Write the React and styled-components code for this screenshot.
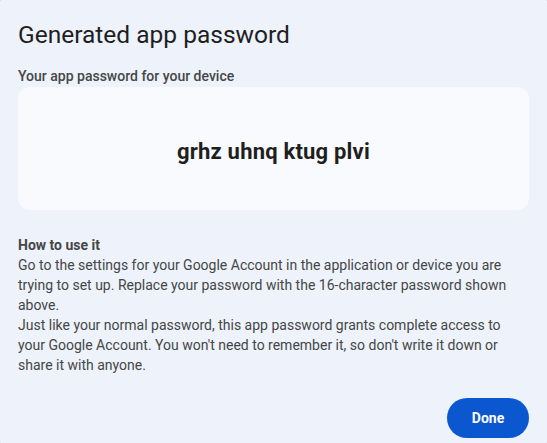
import React from "react";
import styled, { createGlobalStyle } from "styled-components";

const GlobalStyle = createGlobalStyle`
  html, body {
    margin: 0;
    padding: 0;
    background: #5f6368;
    overflow: hidden;
  }
  * { box-sizing: border-box; }
`;

const Dialog = styled.div`
  width: 563px;
  height: 459px;
  margin: -8px 0 0 -8px;
  padding: 27px 26px 0 26px;
  background: #eef2fa;
  border-radius: 28px;
  font-family: Roboto, "Liberation Sans", sans-serif;
  display: flex;
  flex-direction: column;
`;

const Title = styled.h1`
  margin: 0;
  font-size: 24.5px;
  font-weight: 400;
  line-height: 32px;
  color: #1f1f1f;
`;

const Label = styled.div`
  margin-top: 15px;
  font-size: 14px;
  font-weight: 500;
  line-height: 20px;
  color: #444746;
`;

const PasswordCard = styled.div`
  margin-top: 1px;
  height: 123px;
  padding-top: 6px;
  border-radius: 12px;
  background: #f8fafd;
  display: flex;
  align-items: center;
  justify-content: center;
`;

const Password = styled.span`
  font-size: 22px;
  font-weight: 700;
  color: #1f1f1f;
  letter-spacing: 0.2px;
`;

const Help = styled.div`
  margin-top: 25px;
  font-size: 14px;
  line-height: 20px;
  color: #444746;
`;

const HelpTitle = styled.div`
  font-weight: 700;
`;

const Actions = styled.div`
  margin-top: auto;
  padding-bottom: 13px;
  display: flex;
  justify-content: flex-end;
`;

const Button = styled.button`
  height: 40px;
  width: 82px;
  border: none;
  border-radius: 20px;
  background: #0b57d0;
  color: #fff;
  font-family: inherit;
  font-size: 14px;
  font-weight: 700;
  cursor: pointer;
`;

export default function App() {
  return (
    <>
      <GlobalStyle />
      <Dialog>
        <Title>Generated app password</Title>
        <Label>Your app password for your device</Label>
        <PasswordCard>
          <Password>grhz uhnq ktug plvi</Password>
        </PasswordCard>
        <Help>
          <HelpTitle>How to use it</HelpTitle>
          <div>
            Go to the settings for your Google Account in the application or
            device you are trying to set up. Replace your password with the
            16-character password shown above.
          </div>
          <div>
            Just like your normal password, this app password grants complete
            access to your Google Account. You won't need to remember it, so
            don't write it down or share it with anyone.
          </div>
        </Help>
        <Actions>
          <Button>Done</Button>
        </Actions>
      </Dialog>
    </>
  );
}
